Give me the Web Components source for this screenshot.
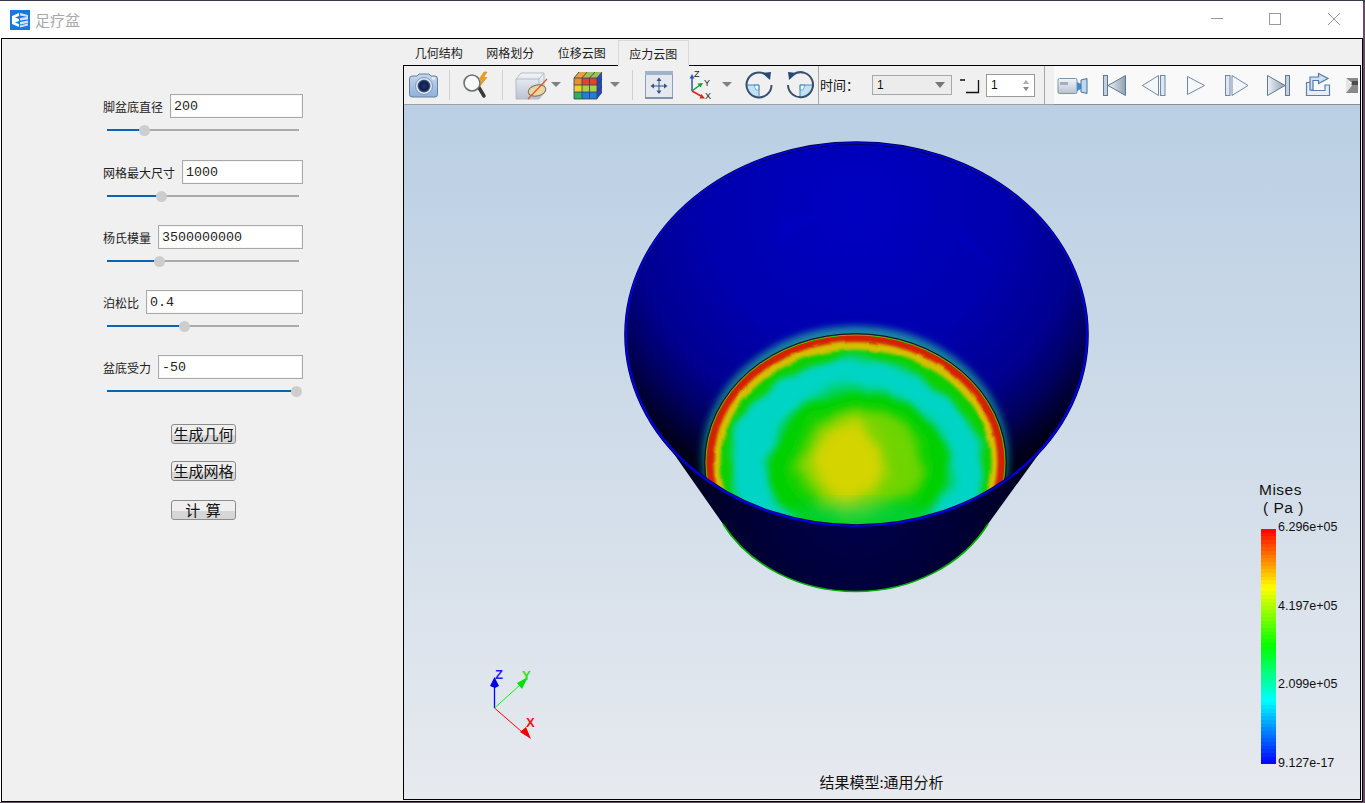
<!DOCTYPE html>
<html lang="zh">
<head>
<meta charset="utf-8">
<title>足疗盆</title>
<style>
  html, body { margin: 0; height: 100%; overflow: hidden; }
  body {
    background: linear-gradient(#38384e 0 2px, #6a4a68 2px);
    font-family: "Noto Sans CJK SC", "Liberation Sans", sans-serif;
    color: #111;
  }
</style>
</head>
<body>
<app-window>
  <title-bar slot="title" text="足疗盆"></title-bar>
  <param-panel slot="left">
    <param-field label="脚盆底直径" value="200" pos="37"></param-field>
    <param-field label="网格最大尺寸" value="1000" pos="54" style="margin-top:24px"></param-field>
    <param-field label="杨氏模量" value="3500000000" pos="52" style="margin-top:23px"></param-field>
    <param-field label="泊松比" value="0.4" pos="77" style="margin-top:23px"></param-field>
    <param-field label="盆底受力" value="-50" pos="189" style="margin-top:23px"></param-field>
    <push-button style="margin-top:27px">生成几何</push-button>
    <push-button style="margin-top:17px">生成网格</push-button>
    <push-button style="margin-top:19px"><span style="letter-spacing:1px">计 算</span></push-button>
  </param-panel>
  <tab-bar slot="tabs" active="3" items="几何结构,网格划分,位移云图,应力云图"></tab-bar>
  <tool-bar slot="tools"></tool-bar>
  <stress-viewer slot="view"></stress-viewer>
</app-window>

<script>
// small helper so each element only has to supply markup
class ShadowElement extends HTMLElement {
  constructor() {
    super();
    this.attachShadow({ mode: 'open' });
  }
}

class AppWindow extends ShadowElement {
  connectedCallback() {
    this.shadowRoot.innerHTML = `
    <style>
      :host { display: flex; flex-direction: column; width: 1363px; height: 801px; margin-top: 1px; background: #fff; }
      .box { flex: 1; min-height: 0; display: flex; border: 1px solid #000; margin-left: 1px; background: #f0f0f0; }
      .left { width: 401px; flex: none; }
      .right { flex: 1; min-width: 0; display: flex; flex-direction: column; padding-bottom: 1px; margin-right: 1px; }
      .frame { flex: 1; min-height: 0; display: flex; flex-direction: column; border: 1px solid #000; }
    </style>
    <slot name="title"></slot>
    <div class="box">
      <div class="left"><slot name="left"></slot></div>
      <div class="right">
        <slot name="tabs"></slot>
        <div class="frame">
          <slot name="tools"></slot>
          <slot name="view"></slot>
        </div>
      </div>
    </div>`;
  }
}

class TitleBar extends ShadowElement {
  connectedCallback() {
    this.shadowRoot.innerHTML = `
    <style>
      :host { display: flex; align-items: center; height: 37px; flex: none; padding-left: 10px; background: #fff; }
      .name { margin-left: 5px; font-size: 15px; color: #a8a8a8; }
      .btns { margin-left: auto; display: flex; padding-right: 4px; }
      .btns svg { display: block; }
    </style>
    <svg width="20" height="20" viewBox="0 0 20 20">
      <rect width="20" height="20" fill="#1878e0"/>
      <path d="M2 6 L9 3 V6 L5 7.5 L9 9 V11 L5 12.5 L9 14 V17 L2 14 Z" fill="#fff"/>
      <path d="M10 3 L18 5 V7 L10 5.5 Z M10 8 L18 6.8 V9.5 L10 10.6 Z M10 12 L18 10.5 V13 L10 14.5 Z M10 15.5 L18 13.6 V15.5 L10 17.4 Z" fill="#cfe4fb"/>
    </svg>
    <span class="name">${this.getAttribute('text')}</span>
    <div class="btns">
      <svg width="58" height="37" viewBox="0 0 58 37"><path d="M2 17.5 H14" stroke="#999" stroke-width="1"/></svg>
      <svg width="59" height="37" viewBox="0 0 59 37"><rect x="2.5" y="12.5" width="11" height="11" fill="none" stroke="#999"/></svg>
      <svg width="33" height="37" viewBox="0 0 33 37"><path d="M2 12 L14 24 M14 12 L2 24" stroke="#999" stroke-width="1"/></svg>
    </div>`;
  }
}

class ParamPanel extends ShadowElement {
  connectedCallback() {
    this.shadowRoot.innerHTML = `
    <style>
      :host { display: flex; flex-direction: column; align-items: flex-start; padding: 55px 0 0 101px; box-sizing: border-box; height: 100%; }
    </style>
    <slot></slot>`;
  }
}

class ParamField extends ShadowElement {
  connectedCallback() {
    const pos = Number(this.getAttribute('pos'));
    this.shadowRoot.innerHTML = `
    <style>
      :host { display: block; width: 200px; }
      .row { display: flex; align-items: center; gap: 7px; height: 24px; }
      label { font-size: 12px; white-space: nowrap; color: #222; }
      .input { flex: 1; height: 24px; box-sizing: border-box; border: 1px solid #a8a8a8; background: #fff; padding-left: 3px;
               font: 13.33px/24px "Liberation Mono", monospace; color: #222; box-shadow: inset 0 0 0 1px #f6f6f6; }
      .slider { position: relative; height: 12px; margin: 6px 4px 0; width: 192px; }
      .track { position: absolute; left: 0; right: 0; top: 5px; height: 2px;
               background: linear-gradient(to right, #0a64b4 ${pos}px, #aaa ${pos}px); }
      .thumb { position: absolute; left: ${pos - 5}px; top: 1px; width: 11px; height: 11px; border-radius: 50%; background: #cdcdcd; }
    </style>
    <div class="row"><label>${this.getAttribute('label')}</label><div class="input">${this.getAttribute('value')}</div></div>
    <div class="slider"><div class="track"></div><div class="thumb"></div></div>`;
  }
}

class PushButton extends ShadowElement {
  connectedCallback() {
    this.shadowRoot.innerHTML = `
    <style>
      :host { display: flex; align-items: center; justify-content: center; width: 65px; height: 20px; box-sizing: border-box; margin-left: 68px;
              border: 1px solid #8c8c8c; border-radius: 3px; font-size: 15px; line-height: 18px; color: #111;
              background: linear-gradient(#efefef 0 58%, #d6d6d6 58%); overflow: hidden; white-space: nowrap; }
    </style>
    <slot></slot>`;
  }
}

class TabBar extends ShadowElement {
  connectedCallback() {
    const active = Number(this.getAttribute('active'));
    const tabs = this.getAttribute('items').split(',').map((t, i) =>
      `<div class="tab${i === active ? ' on' : ''}">${t}</div>`).join('');
    this.shadowRoot.innerHTML = `
    <style>
      :host { display: flex; height: 27px; flex: none; position: relative; z-index: 1; margin-bottom: -1px; }
      .tab { width: 71.5px; box-sizing: border-box; text-align: center; font-size: 12px; line-height: 27px; color: #222; }
      .on { background: #f0f0f0; border: 1px solid #d8d8d8; border-bottom: 0; margin-top: 1px; height: 26px; line-height: 25px; }
    </style>
    ${tabs}`;
  }
}

class ToolBar extends ShadowElement {
  connectedCallback() {
    const arrow = x => `<path d="M${x - 5} 16 H${x + 5} L${x} 21 Z" fill="#808080"/>`;
    this.shadowRoot.innerHTML = `
    <style>
      :host { display: flex; height: 38px; flex: none; background: #f0f0f0; border-bottom: 1px solid #a0a0a0; font-size: 13px; }
      svg { display: block; flex: none; }
      .sep { width: 1px; flex: none; margin: 4px 0; background: #cfcfcf; }
      .sep.full { margin: 0; background: #a8a8a8; }
      .time { width: 53px; flex: none; box-sizing: border-box; padding-left: 1px; line-height: 38px; white-space: nowrap; color: #111; }
      .combo { width: 80px; height: 20px; flex: none; align-self: center; box-sizing: border-box; border: 1px solid #a8a8a8; display: flex; align-items: center; padding: 0 6px 0 4px; justify-content: space-between;
               font: 12px "Liberation Sans", sans-serif; background: #ececec; }
      .combo i { border: 5px solid transparent; border-top: 6px solid #777; border-bottom: 0; }
      .spin { width: 49px; height: 23px; flex: none; align-self: center; box-sizing: border-box; border: 1px solid #9a9a9a; background: #fff; display: flex; align-items: center; justify-content: space-between;
              padding: 0 5px 0 4px; font: 12px "Liberation Sans", sans-serif; }
      .spin b { display: flex; flex-direction: column; gap: 3px; }
      .spin b i { border: 3px solid transparent; }
      .spin b i:first-child { border-bottom: 4px solid #aaa; border-top: 0; }
      .spin b i:last-child { border-top: 4px solid #888; border-bottom: 0; }
      .player { flex: 1; display: flex; margin-left: 9px; background: #f9f9f9; border-bottom: 1px solid #8e8e8e; margin-bottom: -1px; min-width: 0; }
    </style>
    <svg width="45" height="38" viewBox="0 0 45 38">
      <defs>
        <linearGradient id="camBody" x1="0" y1="0" x2="0" y2="1"><stop offset="0" stop-color="#c6d8ee"/><stop offset="1" stop-color="#8fb0d8"/></linearGradient>
        <linearGradient id="grayBody" x1="0" y1="0" x2="0" y2="1"><stop offset="0" stop-color="#f2f5f9"/><stop offset="1" stop-color="#b9c3d0"/></linearGradient>
        <linearGradient id="triFill" x1="0" y1="0" x2="1" y2="0"><stop offset="0" stop-color="#eef2f6"/><stop offset="1" stop-color="#8fa0b2"/></linearGradient>
        <radialGradient id="lens"><stop offset="0" stop-color="#20356e"/><stop offset=".65" stop-color="#0e1c48"/><stop offset="1" stop-color="#4d6a96"/></radialGradient>
      </defs>
      <path d="M5.5 13 Q5.500 10 8 10 H13 L15 8 H25 L27 10 H31 Q33.500 10 33.500 13 V28.500 Q33.500 31 31 31 H8 Q5.500 31 5.500 28.500 Z" fill="url(#camBody)" stroke="#6380a6"/>
      <circle cx="20" cy="20" r="8.500" fill="#dfe8f3" stroke="#7f98ba"/>
      <circle cx="20" cy="20" r="6.500" fill="url(#lens)"/>
      <rect x="28" y="11.500" width="3" height="2" fill="#eef4fb"/>
    </svg>
    <div class="sep"></div>
    <svg width="52" height="38" viewBox="0 0 52 38">
      <path d="M28 20 L34 30" stroke="#3a3a3a" stroke-width="3.500" stroke-linecap="round"/>
      <circle cx="22" cy="17" r="8" fill="#f6f8fa" stroke="#6f6f6f" stroke-width="1.600"/>
      <path d="M34 6 L28.500 14 H32 L30 20 L37 11.500 H33.500 L37 6 Z" fill="#f0a020" stroke="#c67a10" stroke-width=".5"/>
    </svg>
    <div class="sep"></div>
    <svg width="65" height="38" viewBox="0 0 65 38">
      <path d="M13 13 L18 7 H41 V27 L36 33 H13 Z" fill="url(#grayBody)" stroke="#b4bcc8"/>
      <path d="M13 13 H36 V33 M36 13 L41 7" fill="none" stroke="#b4bcc8"/>
      <ellipse cx="34" cy="24.500" rx="9" ry="5.500" transform="rotate(-14 34 24.500)" fill="#ead79a" stroke="#6d6d6d"/>
      <path d="M25 33 L44 13" stroke="#e0543a" stroke-width="1.200"/>
      ${arrow(53)}
    </svg>
    <svg width="64" height="38" viewBox="0 0 64 38">
      <path d="M6 12 L11 6 H34 L29 12 Z" fill="#9ec05a"/>
      <path d="M6 12 L11 6 H19 L14 12 Z" fill="#e8a040"/>
      <path d="M29 12 L34 6 V27 L29 33 Z" fill="#2a4ab0"/>
      <rect x="6" y="12" width="23" height="7" fill="#e8402c"/>
      <rect x="6" y="12" width="8" height="7" fill="#e89030"/>
      <rect x="6" y="19" width="23" height="7" fill="#f0d030"/>
      <rect x="14" y="19" width="15" height="7" fill="#a8d048"/>
      <rect x="6" y="26" width="23" height="7" fill="#30b060"/>
      <rect x="14" y="26" width="15" height="7" fill="#2080d8"/>
      <path d="M6 12 H29 V33 H6 Z M14 12 V33 M21.500 12 V33 M6 19 H29 M6 26 H29 M29 12 L34 6 M11 6 L6 12 M19 6 L14 12 M27 6 L21.500 12 M29 19 L34 13 M29 26 L34 20" fill="none" stroke="#2b3f5a" stroke-width=".8"/>
      ${arrow(47)}
    </svg>
    <div class="sep"></div>
    <svg width="51" height="38" viewBox="0 0 51 38">
      <rect x="12.500" y="5.500" width="27" height="27" fill="#e4e9f0" stroke="#8ca0bc"/>
      <rect x="12" y="5" width="28" height="4" fill="#9fb3cf"/>
      <rect x="12" y="31" width="28" height="2" fill="#7d93b2"/>
      <path d="M26 11.500 L23.500 15 H28.500 Z M26 28 L23.500 24.500 H28.500 Z M17.500 20 L21 17.500 V22.500 Z M34.500 20 L31 17.500 V22.500 Z" fill="#33527c"/>
      <path d="M26 15 V24.500 M21 20 H31" stroke="#33527c"/>
    </svg>
    <svg width="56" height="38" viewBox="0 0 56 38">
      <path d="M8 25 V12" stroke="#2a58b0" stroke-width="1.500"/><path d="M8 8 L5.500 12.500 H10.500 Z" fill="#2a58b0"/>
      <path d="M8 25 L16 19" stroke="#1e9a40" stroke-width="1.500"/><path d="M19 17 L13.500 17.500 L16.500 21.500 Z" fill="#1e9a40"/>
      <path d="M8 25 L17 30" stroke="#e02020" stroke-width="1.500"/><path d="M21 32.500 L15.500 32.500 L17.500 28 Z" fill="#e02020"/>
      <text x="10" y="11" font-family="Liberation Sans, sans-serif" font-size="9" fill="#222">Z</text>
      <text x="20" y="20" font-family="Liberation Sans, sans-serif" font-size="9" fill="#222">Y</text>
      <text x="21" y="33" font-family="Liberation Sans, sans-serif" font-size="9" fill="#222">X</text>
      ${arrow(43)}
    </svg>
    <svg width="40" height="38" viewBox="0 0 40 38">
      <path d="M7 19 H19 V31 A12 12 0 0 1 7 19 Z" fill="#bfe2f6"/>
      <path d="M14 19 H19 V24 H16 Z" fill="#f2fafe" stroke="#4f90bc" stroke-width=".7"/>
      <path d="M7 19 H19 V31" fill="none" stroke="#4a8ab8" stroke-width="1"/>
      <path d="M25 8 A12.500 12.500 0 1 0 31.500 19" fill="none" stroke="#38506e" stroke-width="2"/>
      <path d="M31 6 L22 7 L30 14 Z" fill="#274a74"/>
    </svg>
    <svg width="38" height="38" viewBox="0 0 38 38">
      <path d="M33 19 H20 V31 A12.500 12.500 0 0 0 33 19 Z" fill="#bfe2f6"/>
      <path d="M25 19 H20 V24 H23 Z" fill="#f2fafe" stroke="#4f90bc" stroke-width=".7"/>
      <path d="M33 19 H20 V31" fill="none" stroke="#4a8ab8" stroke-width="1"/>
      <path d="M14 8 A12.500 12.500 0 1 1 8 19" fill="none" stroke="#38506e" stroke-width="2"/>
      <path d="M8 6 L17 7 L9 14 Z" fill="#274a74"/>
    </svg>
    <div class="sep full"></div>
    <div class="time">时间：</div>
    <div class="combo"><span>1</span><i></i></div>
    <svg width="34" height="38" viewBox="0 0 34 38">
      <path d="M8 14 H13 M14 26.500 H26.500 V14" fill="none" stroke="#111" stroke-width="1.300"/>
    </svg>
    <div class="spin"><span>1</span><b><i></i><i></i></b></div>
    <div class="sep full" style="margin-left:9px"></div>
    <div class="player">
      <svg width="40" height="38" viewBox="0 0 40 38">
        <rect x="4" y="12.500" width="19" height="15" rx="1.500" fill="url(#grayBody)" stroke="#7e93ae"/>
        <rect x="6" y="16" width="8" height="3" fill="#a4afbd"/>
        <path d="M23 16 L27 18 V23 L23 25 Z" fill="#3e8cc8"/>
        <path d="M27 14 L33 12.500 V27.500 L27 26 Z" fill="#bcd9ef" stroke="#4c6f98"/>
      </svg>
      <svg width="40" height="38" viewBox="0 0 40 38">
        <rect x="9.500" y="9.500" width="4" height="20" fill="#c5d0dc" stroke="#5f7897"/>
        <path d="M31.500 9.500 V29.500 L14 19.500 Z" fill="url(#triFill)" stroke="#5f7897"/>
      </svg>
      <svg width="42" height="38" viewBox="0 0 42 38">
        <path d="M24.500 9.500 V29.500 L8.500 19.500 Z" fill="#f4f7fa" stroke="#6e88a8"/>
        <rect x="26.500" y="9.500" width="4.500" height="20" fill="#dfe6ee" stroke="#6e88a8"/>
      </svg>
      <svg width="40" height="38" viewBox="0 0 40 38">
        <path d="M11.500 10.500 V28.500 L28.500 19.500 Z" fill="#f6f8fb" stroke="#6e88a8"/>
      </svg>
      <svg width="42" height="38" viewBox="0 0 42 38">
        <rect x="9.500" y="9.500" width="4.500" height="20" fill="#dfe6ee" stroke="#6e88a8"/>
        <path d="M16 9.500 V29.500 L32 19.500 Z" fill="#f4f7fa" stroke="#6e88a8"/>
      </svg>
      <svg width="40" height="38" viewBox="0 0 40 38">
        <path d="M9.500 9.500 V29.500 L27 19.500 Z" fill="url(#triFill)" stroke="#5f7897"/>
        <rect x="27.500" y="9.500" width="4" height="20" fill="#c5d0dc" stroke="#5f7897"/>
      </svg>
      <svg width="40" height="38" viewBox="0 0 40 38">
        <path d="M8.500 16.500 H13.500 V24.500 H27 V19 H31.500 V29.500 H8.500 Z" fill="#e6eef6" stroke="#5f7fa6" stroke-width="1.200"/>
        <path d="M20.500 7.500 L30 12.500 L20.500 17.500 V14.500 H15 V24 H12 V11 H20.500 Z" fill="#cfe0f0" stroke="#4f7aa8" stroke-width="1.200"/>
      </svg>
      <svg width="22" height="38" viewBox="0 0 22 38">
        <path d="M8 12 L14 17 L8 22 V27 H20 V12 Z" fill="#8a8a8a"/>
        <path d="M8 12 L14 19.500 L8 27 Z" fill="#e4e4e4"/>
        <path d="M14 15 H20 V19 H14 Z" fill="#4c4c4c"/>
      </svg>
    </div>`;
  }
}

class StressViewer extends ShadowElement {
  connectedCallback() {
    this.shadowRoot.innerHTML = `
    <style>
      :host { display: block; flex: 1; min-height: 0; position: relative; overflow: hidden;
              background: linear-gradient(#bacfe4, #e7eaef); }
      svg { display: block; position: absolute; left: 0; top: 0; }
      color-legend { position: absolute; left: 853px; top: 376px; }
      axis-triad { position: absolute; left: 76px; top: 560px; }
      .caption { position: absolute; left: 0; right: 0; bottom: 7px; text-align: center; font-size: 15px; color: #111; padding-right: 1px; }
    </style>
    <svg width="957" height="694" viewBox="404 105 957 694">
      <defs>
        <radialGradient id="inner" gradientUnits="userSpaceOnUse" cx="856" cy="205" r="300">
          <stop offset="0" stop-color="#0000c2"/><stop offset=".5" stop-color="#0000ae"/>
          <stop offset=".75" stop-color="#000090"/><stop offset=".87" stop-color="#000060"/><stop offset="1" stop-color="#000018"/>
        </radialGradient>
        <radialGradient id="outer" gradientUnits="userSpaceOnUse" cx="856" cy="500" r="190">
          <stop offset="0" stop-color="#000050"/><stop offset=".6" stop-color="#000034"/><stop offset="1" stop-color="#00001a"/>
        </radialGradient>
        <linearGradient id="glow" x1="0" y1="0" x2="0" y2="1">
          <stop offset="0" stop-color="#1c88aa"/><stop offset=".45" stop-color="#0c6478"/><stop offset="1" stop-color="#003050"/>
        </linearGradient>
        <clipPath id="rim"><ellipse cx="856.500" cy="334.500" rx="230.500" ry="191.500"/></clipPath>
        <clipPath id="floor"><ellipse cx="855.500" cy="462.500" rx="150.500" ry="128.500"/></clipPath>
        <filter id="b2" x="-20%" y="-20%" width="140%" height="140%"><feGaussianBlur stdDeviation="1.600"/></filter>
        <filter id="b3" x="-20%" y="-20%" width="140%" height="140%"><feGaussianBlur stdDeviation="3.500"/></filter>
        <filter id="b5" x="-30%" y="-30%" width="160%" height="160%"><feGaussianBlur stdDeviation="5"/></filter>
        <filter id="b6" x="-30%" y="-30%" width="160%" height="160%"><feGaussianBlur stdDeviation="7"/></filter>
        <filter id="b9" x="-30%" y="-30%" width="160%" height="160%"><feGaussianBlur stdDeviation="9"/></filter>
        <!-- the contours in the result are not clean ellipses, so wobble them -->
        <filter id="wobble" x="-10%" y="-10%" width="120%" height="120%">
          <feTurbulence type="fractalNoise" baseFrequency=".022" numOctaves="2" seed="7" result="n"/>
          <feDisplacementMap in="SourceGraphic" in2="n" scale="20" xChannelSelector="R" yChannelSelector="G"/>
          <feGaussianBlur stdDeviation="1.200"/>
        </filter>
        <filter id="wobbleFine" x="-10%" y="-10%" width="120%" height="120%">
          <feTurbulence type="fractalNoise" baseFrequency=".06" numOctaves="1" seed="3" result="n"/>
          <feDisplacementMap in="SourceGraphic" in2="n" scale="4" xChannelSelector="R" yChannelSelector="G"/>
        </filter>
      </defs>

      <path d="M667 444 L723 524 A150.500 128.500 0 0 0 988 524 L1046 444 Z" fill="url(#outer)"/>
      <path d="M723 524 A150.500 128.500 0 0 0 988 524" fill="none" stroke="#00b000" stroke-width="1.600"/>

      <g clip-path="url(#rim)">
        <ellipse cx="856.500" cy="334.500" rx="230.500" ry="191.500" fill="url(#inner)"/>
        <path d="M780 218 L818 216 L775 250 Z M950 220 L1000 268 L965 250 Z" fill="#0000d0" opacity=".25" filter="url(#b2)"/>
        <ellipse cx="855.500" cy="459" rx="154" ry="133" fill="url(#glow)" filter="url(#b3)"/>
        <g clip-path="url(#floor)">
          <rect x="700" y="330" width="312" height="265" fill="#d42000"/>
          <g filter="url(#wobbleFine)">
            <ellipse cx="855.500" cy="462.500" rx="142" ry="120.500" fill="#d4c000" filter="url(#b2)"/>
            <ellipse cx="855.500" cy="463" rx="135" ry="113" fill="#10d000" filter="url(#b2)"/>
          </g>
          <g filter="url(#wobble)">
            <path d="M731 470 C728 410 790 358 858 360 C930 358 982 420 980 470 C982 530 930 580 856 580 C780 580 732 530 731 470 Z" fill="#00d4c4" filter="url(#b3)"/>
            <path d="M770 478 C762 430 810 388 858 386 C908 388 952 426 950 462 C956 496 922 532 860 534 C802 534 774 516 770 478 Z" fill="#00d000" filter="url(#b5)"/>
            <path d="M800 470 C797 432 828 405 862 408 C898 412 928 438 922 470 C917 502 880 518 848 512 C818 507 802 497 800 470 Z" fill="#70d400" filter="url(#b6)"/>
            <path d="M812 465 C810 436 832 418 852 423 C882 430 885 455 880 478 C874 503 845 506 831 497 C819 490 815 480 812 465 Z" fill="#d4d400" filter="url(#b6)"/>
          </g>
          <ellipse cx="860" cy="515" rx="70" ry="12" fill="#00d080" filter="url(#b9)" opacity=".5"/>
        </g>
        <ellipse cx="855.500" cy="462.500" rx="149.500" ry="127.500" fill="none" stroke="#30d000" stroke-width="1"/>
        <ellipse cx="855.500" cy="462.500" rx="150.800" ry="128.800" fill="none" stroke="#001018" stroke-width="1"/>
      </g>

      <ellipse cx="856.500" cy="334.500" rx="230.500" ry="191.500" fill="none" stroke="#000040" stroke-width="3.600"/>
      <ellipse cx="856.500" cy="334.500" rx="230.500" ry="191.500" fill="none" stroke="#0000dc" stroke-width="2.200"/>
    </svg>
    <color-legend></color-legend>
    <axis-triad></axis-triad>
    <div class="caption">结果模型:通用分析</div>`;
  }
}

class ColorLegend extends ShadowElement {
  connectedCallback() {
    // banded rainbow, the scale in the picture has about 64 steps
    const stops = [[0, [255, 0, 0]], [.25, [255, 255, 0]], [.5, [0, 255, 0]], [.73, [0, 255, 255]], [1, [0, 0, 255]]];
    const bands = 64;
    const parts = [];
    for (let i = 0; i < bands; i++) {
      const t = (i + .5) / bands;
      let k = 0;
      while (k < stops.length - 2 && t > stops[k + 1][0]) k++;
      const f = (t - stops[k][0]) / (stops[k + 1][0] - stops[k][0]);
      const c = stops[k][1].map((v, n) => Math.round(v + (stops[k + 1][1][n] - v) * f));
      parts.push(`rgb(${c}) ${(i / bands * 100).toFixed(2)}% ${((i + 1) / bands * 100).toFixed(2)}%`);
    }
    this.shadowRoot.innerHTML = `
    <style>
      :host { display: block; width: 100px; font-family: "Liberation Sans", sans-serif; color: #111; }
      .head { font-size: 15.500px; line-height: 18px; height: 48px; letter-spacing: .5px; padding-left: 2px; box-sizing: border-box; }
      .head div + div { padding-left: 4px; }
      .scale { display: flex; height: 235px; margin-left: 4px; }
      .bar { width: 15px; flex: none; background: linear-gradient(${parts.join(',')}); }
      .vals { display: flex; flex-direction: column; justify-content: space-between; height: 254px; margin: -11px 0 0 2px;
              font: 12.500px/18px "Liberation Sans", sans-serif; color: #111; white-space: nowrap; }
    </style>
    <div class="head"><div>Mises</div><div>( Pa )</div></div>
    <div class="scale">
      <div class="bar"></div>
      <div class="vals"><span>6.296e+05</span><span>4.197e+05</span><span>2.099e+05</span><span>9.127e-17</span></div>
    </div>`;
  }
}

class AxisTriad extends ShadowElement {
  connectedCallback() {
    this.shadowRoot.innerHTML = `
    <style>
      :host { display: block; width: 70px; height: 90px; }
      svg { display: block; }
      text { font: bold 13px "Liberation Sans", sans-serif; }
    </style>
    <svg width="70" height="90" viewBox="480 665 70 90">
      <path d="M494.500 708 V686" stroke="#0000ff" stroke-width="1.300"/>
      <path d="M494.500 677 L490 686 L495 688 L499 686 Z" fill="#0000e0"/>
      <path d="M494.500 708 L520 685" stroke="#00ff00" stroke-width="1"/>
      <path d="M528 677 L517 683 L522 689 Z" fill="#00e000"/>
      <path d="M494.500 708 L522 732" stroke="#ff0000" stroke-width="1"/>
      <path d="M531 739 L520 732 L526 727 Z" fill="#f00000"/>
      <text x="495" y="679" fill="#2020ff">Z</text>
      <text x="522" y="680" fill="#30e010">Y</text>
      <text x="526" y="727" fill="#f01010">X</text>
    </svg>`;
  }
}

customElements.define('app-window', AppWindow);
customElements.define('title-bar', TitleBar);
customElements.define('param-panel', ParamPanel);
customElements.define('param-field', ParamField);
customElements.define('push-button', PushButton);
customElements.define('tab-bar', TabBar);
customElements.define('tool-bar', ToolBar);
customElements.define('stress-viewer', StressViewer);
customElements.define('color-legend', ColorLegend);
customElements.define('axis-triad', AxisTriad);
</script>
</body>
</html>
